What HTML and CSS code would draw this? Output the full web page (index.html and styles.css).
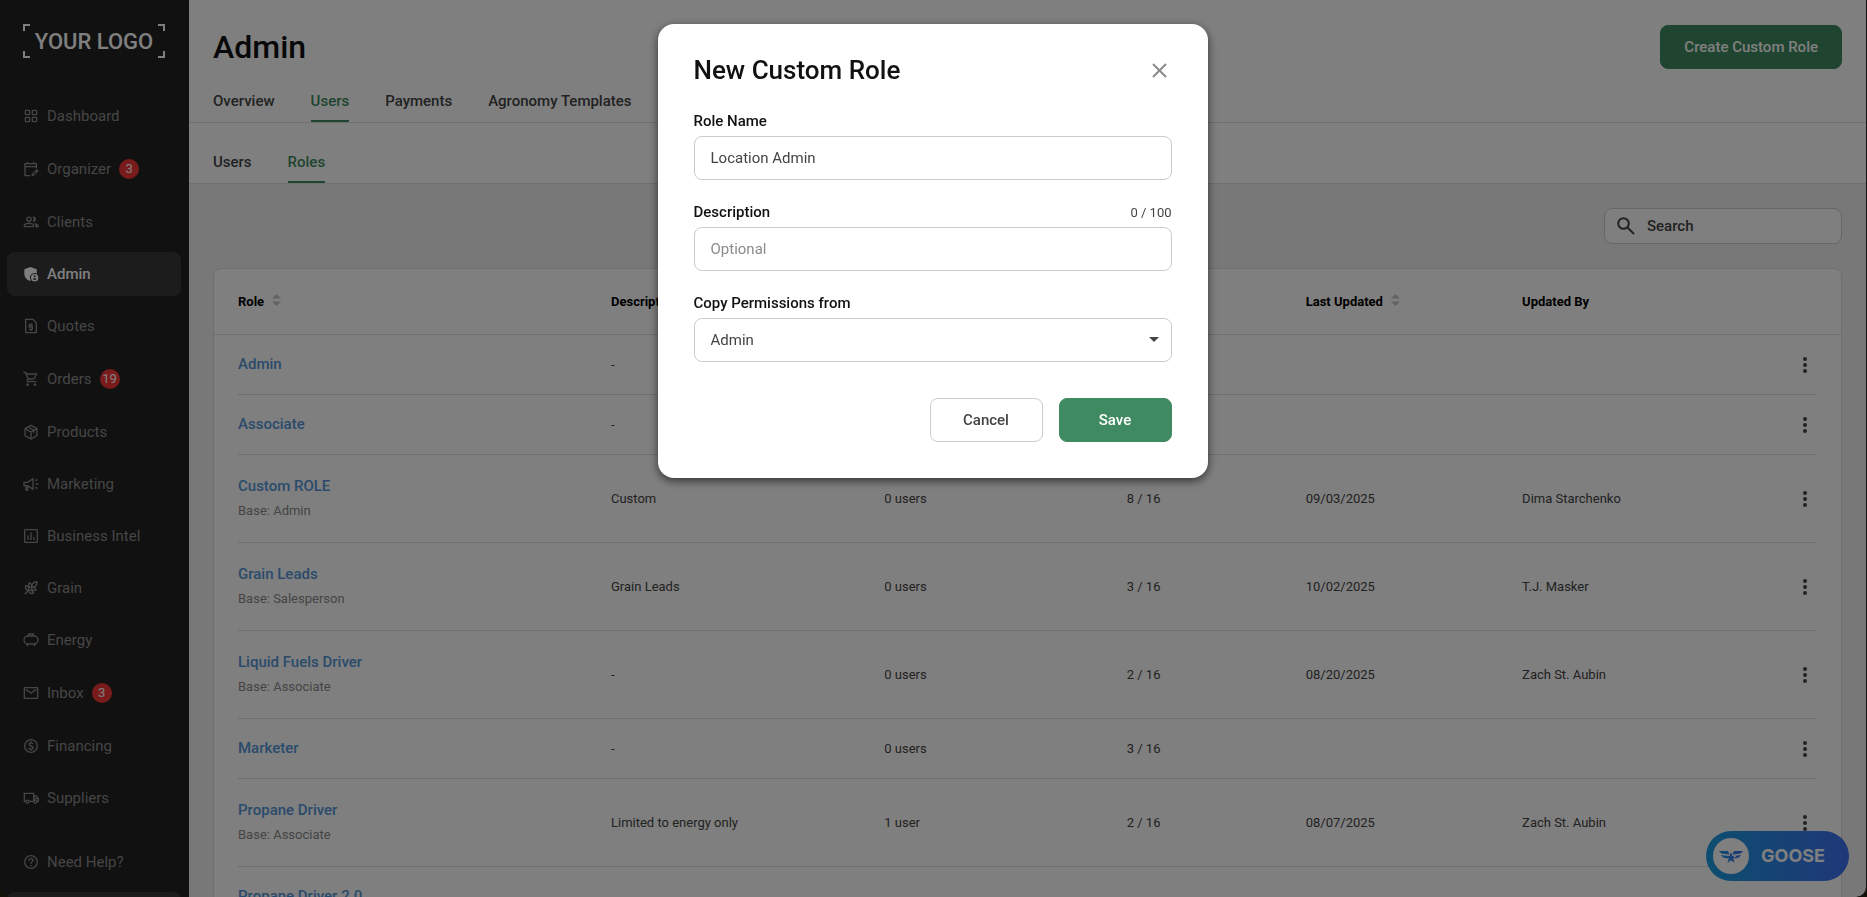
FILE: index.html
```html
<!DOCTYPE html>
<html lang="en">
<head>
<meta charset="utf-8">
<title>Admin – Roles</title>
<link rel="stylesheet" href="styles.css">
</head>
<body>
<div class="app">
  <aside class="sidebar">
    <div class="logo"><i class="corner tl"></i><i class="corner tr"></i><i class="corner bl"></i><i class="corner br"></i>YOUR LOGO</div>
    <nav class="nav">
      <a class="nav-item" href="#"><svg class="icon" viewBox="0 0 24 24"><g class="line"><rect x="3.500" y="3.500" width="6.500" height="6.500" rx="1"/><rect x="14" y="3.500" width="6.500" height="6.500" rx="1"/><rect x="3.500" y="14" width="6.500" height="6.500" rx="1"/><rect x="14" y="14" width="6.500" height="6.500" rx="1"/></g></svg>Dashboard</a>
      <a class="nav-item counted" href="#"><svg class="icon" viewBox="0 0 24 24"><g class="line"><path d="M10.500 22H3V4h17v7M3 8.500h17M7 1.500V4M16 1.500V4"/></g><path d="M13 19.500l6.800-6.800c.5-.5 1.200-.5 1.700 0l1.300 1.300c.5.5.5 1.200 0 1.700L16 22.500h-3zm1.500.6v.9h.9l4.300-4.300-.9-.9z"/></svg>Organizer<span class="badge">3</span></a>
      <a class="nav-item" href="#"><svg class="icon" viewBox="0 0 24 24"><g class="line"><circle cx="9" cy="8" r="3.200"/><path d="M2 19v-1.500C2 15 6 14 9 14s7 1 7 3.500V19z"/></g><path d="M14.500 4c2.500-.5 5 1.300 5 4s-2.500 4.500-5 4c1.800-2.500 1.800-5.500 0-8zM17 13.500c3 .5 6.500 2 6.500 4.500v2h-5v-2.500c0-1.700-.6-3-1.500-4z"/></svg>Clients</a>
      <a class="nav-item active" href="#"><svg class="icon" viewBox="0 0 24 24"><path d="M17 10.500c1.300 0 2.500.3 3.600 1V5L11 1.500 2 5v6.500c0 5 3.700 9.500 8.800 10.800.5-.1.600-.2 1-.4A7 7 0 0 1 17 10.500z"/><path fill-rule="evenodd" d="M17.500 12a5.500 5.500 0 1 0 0 11 5.500 5.500 0 0 0 0-11zm0 2a1.500 1.500 0 1 1 0 3 1.500 1.500 0 0 1 0-3zm0 7c-1.100 0-2.100-.6-2.800-1.500.1-.8 1.800-1.200 2.800-1.200s2.700.4 2.800 1.200c-.7.900-1.700 1.500-2.800 1.500z"/></svg>Admin</a>
      <a class="nav-item" href="#"><svg class="icon" viewBox="0 0 24 24"><g class="line"><path d="M4 2h11l5 5v15H4z"/><path d="M15 10.500H9.500v3H14v3.500H9M12 8v2.500M12 17v2.500"/></g></svg>Quotes</a>
      <a class="nav-item counted" href="#"><svg class="icon" viewBox="0 0 24 24"><path d="M15.550 13c.75 0 1.410-.41 1.750-1.030l4.700-8.490H5.210l-.94-2.200H.500v2H3l3.600 8.310-1.350 2.440C4.520 15.370 5.480 17 7 17h13v-2H7l1.100-2h7.450zM6.160 5.500H19L15.550 11H8.530L6.160 5.500zM7 18.500a2 2 0 1 0 0 4 2 2 0 0 0 0-4zm11 0a2 2 0 1 0 0 4 2 2 0 0 0 0-4z"/></svg>Orders<span class="badge">19</span></a>
      <a class="nav-item" href="#"><svg class="icon" viewBox="0 0 24 24"><g class="line"><path d="M12 2l9 5v10.500L12 22.500l-9-5V7zM3 7l9 5 9-5M12 12v10.500M7.500 4.500l9 5v3.500"/></g></svg>Products</a>
      <a class="nav-item" href="#"><svg class="icon" viewBox="0 0 24 24"><g class="line"><path d="M1.500 9.500H7L15 4v16l-8-5.500H1.500zM4.500 15v6H7v-6M19 12h4M18.500 7l3-2M18.500 17l3 2"/></g></svg>Marketing</a>
      <a class="nav-item" href="#"><svg class="icon" viewBox="0 0 24 24"><g class="line"><rect x="2.500" y="2.500" width="19" height="19" rx="1"/><path d="M7.500 18v-7M12 18V6.500M16.500 18v-4"/></g></svg>Business Intel</a>
      <a class="nav-item" href="#"><svg class="icon" viewBox="0 0 24 24"><g class="line"><path d="M2.500 21.500l6-6M8.500 15.500c-4-.5-5.500-3-4.500-7 4 .5 5.500 3 4.500 7zM8.500 15.500c.5 4 3 5.500 7 4.500-.5-4-3-5.500-7-4.500zM12.500 11.500c-4-.5-4.500-3-3.500-7 4 .5 4.500 3 3.500 7zM12.500 11.500c.5 4 3 4.500 7 3.500-.5-4-3-4.500-7-3.500zM13.500 10.500c-.5-5 2-7.500 7.500-7.500 0 5.500-2.500 8-7.500 7.500z"/></g></svg>Grain</a>
      <a class="nav-item" href="#"><svg class="icon" viewBox="0 0 24 24"><g class="line"><rect x="1.500" y="6" width="21" height="12" rx="6"/><path d="M8.500 6V3h7v3M6.500 18v3.500M17.500 18v3.500"/></g></svg>Energy</a>
      <a class="nav-item counted" href="#"><svg class="icon" viewBox="0 0 24 24"><g class="line"><rect x="2" y="4" width="20" height="16" rx="1"/><path d="M4 6.500l8 5.500 8-5.500"/></g></svg>Inbox<span class="badge">3</span></a>
      <a class="nav-item" href="#"><svg class="icon" viewBox="0 0 24 24"><g class="line"><circle cx="12" cy="12" r="9.500"/><path d="M15 9c-.5-1.300-1.500-1.800-3-1.800-1.700 0-3 .8-3 2.300 0 3.500 6.200 1.500 6.200 5 0 1.500-1.400 2.300-3.200 2.300-1.600 0-2.900-.7-3.300-2.200M12 5v2M12 17v2"/></g></svg>Financing</a>
      <a class="nav-item" href="#"><svg class="icon" viewBox="0 0 24 24"><g class="line"><path d="M4 17H2V5h14v12H9M16 9h4l3 4v4h-2M16 13h6"/><circle cx="6.500" cy="17.500" r="2.300"/><circle cx="18.500" cy="17.500" r="2.300"/></g></svg>Suppliers</a>
      <a class="nav-item help" href="#"><svg class="icon" viewBox="0 0 24 24"><g class="line"><circle cx="12" cy="12" r="9.500"/><path d="M9 10c0-4 6-4 6-.5 0 2-3 2.500-3 5M12 16.500v2"/></g></svg>Need Help?</a>
      <a class="nav-item account" href="#" aria-label="Account"></a>
    </nav>
  </aside>

  <main class="main">
    <header class="page-head">
      <div class="title-row"><h1>Admin</h1><button class="btn primary" type="button">Create Custom Role</button></div>
      <nav class="tabs"><a href="#">Overview</a><a class="on" href="#">Users</a><a href="#">Payments</a><a href="#">Agronomy Templates</a></nav>
    </header>
    <nav class="tabs sub"><a href="#">Users</a><a class="on" href="#">Roles</a></nav>
    <section class="content">
      <label class="search"><svg viewBox="0 0 18 18"><circle cx="6.500" cy="6.500" r="5.300"/><path d="M10.500 10.500l6.500 6.500"/></svg><input type="search" placeholder="Search" aria-label="Search"></label>
      <div class="card">
        <table>
          <colgroup><col class="c-role"><col class="c-desc"><col class="c-users"><col class="c-perm"><col class="c-date"><col class="c-by"><col class="c-menu"></colgroup>
          <thead><tr><th>Role<svg class="sort" viewBox="0 0 9 12"><path d="M4.500 0L9 4.500H0zM0 7.500h9L4.500 12z"/></svg></th><th>Description</th><th>Users</th><th>Permissions</th><th>Last Updated<svg class="sort" viewBox="0 0 9 12"><path d="M4.500 0L9 4.500H0zM0 7.500h9L4.500 12z"/></svg></th><th>Updated By</th><th></th></tr></thead>
          <tbody>
            <tr><td><a href="#">Admin</a></td><td>-</td><td></td><td></td><td></td><td></td><td><button class="more" type="button" aria-label="More"><i></i><i></i><i></i></button></td></tr>
            <tr><td><a href="#">Associate</a></td><td>-</td><td></td><td></td><td></td><td></td><td><button class="more" type="button" aria-label="More"><i></i><i></i><i></i></button></td></tr>
            <tr class="tall"><td><a href="#">Custom ROLE</a><small>Base: Admin</small></td><td>Custom</td><td>0 users</td><td>8 / 16</td><td>09/03/2025</td><td>Dima Starchenko</td><td><button class="more" type="button" aria-label="More"><i></i><i></i><i></i></button></td></tr>
            <tr class="tall"><td><a href="#">Grain Leads</a><small>Base: Salesperson</small></td><td>Grain Leads</td><td>0 users</td><td>3 / 16</td><td>10/02/2025</td><td>T.J. Masker</td><td><button class="more" type="button" aria-label="More"><i></i><i></i><i></i></button></td></tr>
            <tr class="tall"><td><a href="#">Liquid Fuels Driver</a><small>Base: Associate</small></td><td>-</td><td>0 users</td><td>2 / 16</td><td>08/20/2025</td><td>Zach St. Aubin</td><td><button class="more" type="button" aria-label="More"><i></i><i></i><i></i></button></td></tr>
            <tr><td><a href="#">Marketer</a></td><td>-</td><td>0 users</td><td>3 / 16</td><td></td><td></td><td><button class="more" type="button" aria-label="More"><i></i><i></i><i></i></button></td></tr>
            <tr class="tall"><td><a href="#">Propane Driver</a><small>Base: Associate</small></td><td>Limited to energy only</td><td>1 user</td><td>2 / 16</td><td>08/07/2025</td><td>Zach St. Aubin</td><td><button class="more" type="button" aria-label="More"><i></i><i></i><i></i></button></td></tr>
            <tr class="tall"><td><a href="#">Propane Driver 2.0</a></td><td></td><td></td><td></td><td></td><td></td><td></td></tr>
          </tbody>
        </table>
      </div>
    </section>
  </main>

  <button class="goose" type="button">
    <svg viewBox="0 0 36 36"><defs><linearGradient id="wing" x1="0" x2="1"><stop offset="0" stop-color="#1d93dc"/><stop offset="1" stop-color="#3d70ee"/></linearGradient></defs><circle cx="18" cy="18" r="18" fill="#fff"/><path fill="url(#wing)" d="M6 13h9l1.500 3.500-6.500-.7C8 15.500 7 14.500 6 13zM8 17l7.500 1-1 2.500-3.500-.8c-1.500-.5-2.300-1.500-3-2.700zM30 13h-9l-1.500 3.500 6.500-.7c2-.3 3-1.300 4-2.800zM28 17l-7.500 1 1 2.500 3.500-.8c1.500-.5 2.300-1.500 3-2.700zM18 14l1.500 4h4l-3.200 2.500 1.200 4.500-3.500-2.700-3.500 2.700 1.200-4.500-3.200-2.500h4z"/></svg>GOOSE
  </button>
</div>

<div class="overlay">
  <form class="dialog" role="dialog" aria-labelledby="dialog-title">
    <div class="dialog-head"><h2 id="dialog-title">New Custom Role</h2><button class="close" type="button" aria-label="Close"><svg viewBox="0 0 24 24"><path d="M5 6l13 13M18 6L5 19"/></svg></button></div>
    <div class="fields">
      <div class="field"><label for="role-name">Role Name</label><input id="role-name" type="text" value="Location Admin"></div>
      <div class="field"><div class="label-row"><label for="description">Description</label><span>0 / 100</span></div><input id="description" type="text" placeholder="Optional"></div>
      <div class="field"><label for="copy-from">Copy Permissions from</label><div class="select"><select id="copy-from"><option>Admin</option><option>Associate</option></select><svg viewBox="0 0 10 5"><path d="M0 0h10L5 5z"/></svg></div></div>
    </div>
    <div class="actions"><button class="btn" type="button">Cancel</button><button class="btn primary" type="submit">Save</button></div>
  </form>
</div>
</body>
</html>
```
FILE: styles.css
```css
* { box-sizing: border-box; }

body {
  margin: 0;
  background: #24220f;
  font: 15px/20px Roboto, "Liberation Sans", sans-serif;
  color: #444;
}

a { color: inherit; text-decoration: none; }
button, input, select { font: inherit; color: inherit; }
h1, h2 { margin: 0; font-weight: 500; color: #111; }

.app {
  display: flex;
  height: 100vh;
  overflow: hidden;
  border-radius: 0 0 10px 10px;
  background: #222;
}

/* Sidebar */
.sidebar { flex: none; width: 189px; padding: 24px 8px 0 7px; }

.logo {
  position: relative;
  width: 142px;
  height: 34px;
  margin: 0 0 36px 16px;
  font-size: 22px;
  font-weight: 500;
  line-height: 35px;
  text-align: center;
  white-space: nowrap;
  color: #fff;
}
.corner { position: absolute; width: 7px; height: 7px; border: 0 solid #fff; }
.tl { top: 0; left: 0; border-width: 2px 0 0 2px; }
.tr { top: 0; right: 0; border-width: 2px 2px 0 0; }
.bl { bottom: 0; left: 0; border-width: 0 0 2px 2px; }
.br { bottom: 0; right: 0; border-width: 0 2px 2px 0; }

.nav { display: flex; flex-direction: column; gap: 8px; }
.nav-item {
  display: flex;
  align-items: center;
  gap: 8px;
  height: 44px;
  padding: 0 16px;
  border-radius: 8px;
  color: #8c8c8c;
}
.nav-item.counted { height: 46px; }
.nav-item.active { background: #383838; color: #fff; font-weight: 500; }
.nav-item.help { margin-top: 12px; }
.nav-item.account { background: #383838; }
.icon { flex: none; width: 16px; height: 16px; fill: currentColor; }
.line { fill: none; stroke: currentColor; stroke-width: 2; }
.badge {
  width: 20px;
  height: 20px;
  border-radius: 50%;
  background: #f43636;
  color: #fff;
  font-size: 13px;
  text-align: center;
}

/* Page */
.main { flex: 1; min-width: 0; margin-right: 1px; background: #f0f0f0; border-radius: 0 0 10px 0; overflow: hidden; }
.page-head { padding-top: 25px; background: #fff; }
.title-row { display: flex; justify-content: space-between; align-items: center; padding: 0 24px; }
h1 { font-size: 32px; line-height: 44px; }

.btn {
  height: 44px;
  min-width: 113px;
  padding: 0 23px;
  border: 1px solid #ccc;
  border-radius: 8px;
  background: #fff;
  font-weight: 500;
}
.btn.primary { border-color: #3f8a60; background: #3f8a60; color: #fff; }

.tabs {
  display: flex;
  gap: 36px;
  padding: 22px 24px 0;
  border-bottom: 1px solid #dedede;
  background: #fff;
  font-weight: 500;
}
.tabs.sub { padding-top: 29px; }
.tabs a { padding-bottom: 9px; border-bottom: 2px solid transparent; }
.tabs .on { color: #3f8a60; border-color: #3f8a60; }

.content { padding: 24px 24px 0; }
.search {
  display: flex;
  align-items: center;
  gap: 12px;
  width: 238px;
  height: 36px;
  margin: 0 0 24px auto;
  padding: 0 12px;
  border: 1px solid #ccc;
  border-radius: 8px;
  background: #fff;
  font-weight: 500;
}
.search svg { flex: none; width: 18px; height: 18px; fill: none; stroke: #444; stroke-width: 2; }
.search input { flex: 1; min-width: 0; padding: 0; border: 0; background: none; }
.search input::placeholder { color: #444; opacity: 1; }

.card { border: 1px solid #dedede; border-radius: 8px; background: #fff; overflow: hidden; }
table { width: 100%; table-layout: fixed; border-collapse: collapse; font-size: 13px; }
.c-role { width: 24.4%; }
.c-desc { width: 16.8%; }
.c-users { width: 14.9%; }
.c-perm { width: 11%; }
.c-date { width: 13.3%; }
.c-menu { width: 60px; }
th, td { padding: 0 0 1px; text-align: left; }
th:first-child, td:first-child { padding-left: 24px; }
thead tr { height: 66px; box-shadow: inset 0 -1px #dedede; }
th { font-weight: 700; color: #000; }
.sort { width: 9px; height: 12px; margin-left: 8px; fill: #c4c4c4; }
tbody tr {
  height: 60px;
  background: linear-gradient(#dedede, #dedede) center bottom / calc(100% - 48px) 1px no-repeat;
}
tbody tr.tall { height: 88px; }
tbody tr.tall:last-child { height: 60px; }
td a { font-size: 15px; font-weight: 500; color: #5596d6; }
td small { display: block; margin-top: 4px; font-size: 13px; color: #8a8a8a; }
.more {
  display: flex;
  flex-direction: column;
  align-items: center;
  gap: 2px;
  padding: 4px 22px;
  border: 0;
  background: none;
}
.more i { width: 4px; height: 4px; border-radius: 50%; background: #444; }

.goose {
  position: absolute;
  right: 18px;
  bottom: 16px;
  display: flex;
  align-items: center;
  gap: 12px;
  width: 143px;
  height: 50px;
  padding: 0 7px;
  border: 0;
  border-radius: 25px;
  background: linear-gradient(90deg, #1a9ce0, #3f70f0);
  color: #fff;
  font: 700 18px/24px Inter, sans-serif;
}
.goose svg { width: 36px; height: 36px; }

/* Dialog */
.overlay {
  position: fixed;
  inset: 0;
  display: flex;
  justify-content: center;
  align-items: flex-start;
  padding: 24px 26px 24px 24px;
  background: rgba(0, 0, 0, 0.5);
}
.dialog {
  width: 550px;
  padding: 32px 36px 36px;
  border-radius: 16px;
  background: #fff;
  box-shadow: 0 3px 10px rgba(0, 0, 0, 0.6);
}
.dialog-head { display: flex; justify-content: space-between; align-items: center; margin-bottom: 27px; }
h2 { font-size: 26px; line-height: 28px; }
.close { display: flex; padding: 0; border: 0; background: none; }
.close svg { width: 24px; height: 24px; fill: none; stroke: #8a8a8a; stroke-width: 2; }
.fields { display: grid; gap: 22px; }
.field { display: grid; gap: 5px; }
.field label { font-weight: 500; color: #111; }
.label-row { display: flex; justify-content: space-between; align-items: flex-end; }
.label-row span { font-size: 13px; line-height: 18px; }
.field input, .field select {
  width: 100%;
  height: 44px;
  padding: 0 16px;
  border: 1px solid #ccc;
  border-radius: 8px;
  background: #fff;
  appearance: none;
}
.field input::placeholder { color: #8c8c8c; }
.select { position: relative; }
.select svg { position: absolute; right: 13px; top: 19px; width: 10px; height: 5px; fill: #444; pointer-events: none; }
.actions { display: flex; justify-content: flex-end; gap: 16px; margin-top: 36px; }
```
